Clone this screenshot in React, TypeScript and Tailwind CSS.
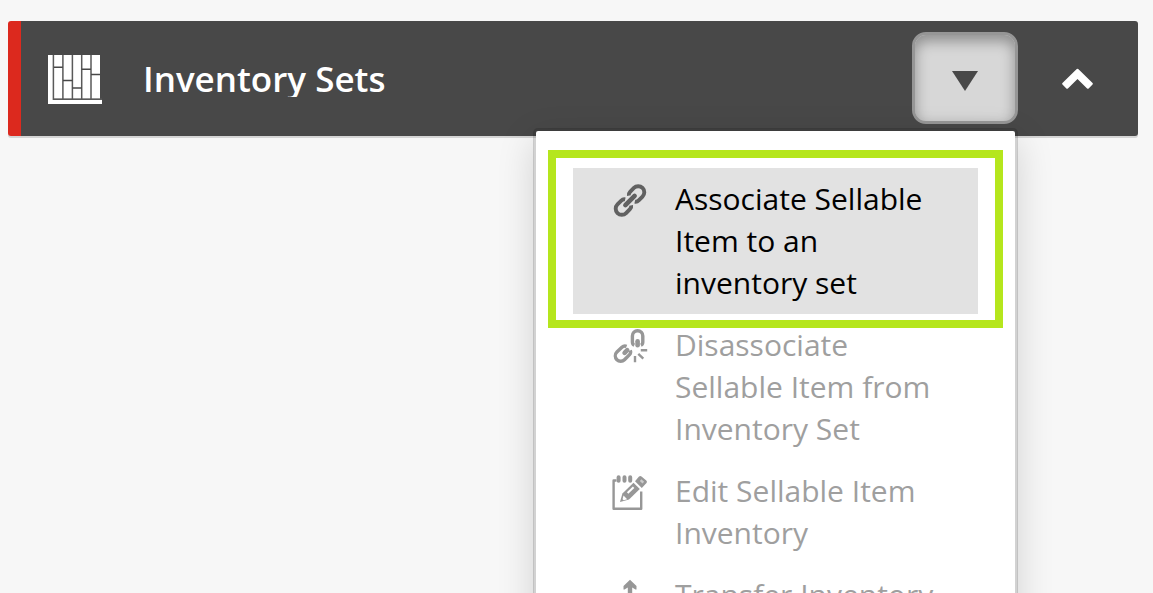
import type { ReactNode } from "react";

function InventoryIcon() {
  return (
    <svg width="54" height="49" viewBox="0 0 54 49" aria-hidden="true" className="mt-0.5 shrink-0">
      <path d="M0 0h5v44.5h49V49H0z" fill="#fff" />
      <path d="M6 0h46v43.8H6z" fill="#fff" />
      <path d="M5.4 0v44.2H54M14.9 0v44M24.4 0v44M33.7 0v44M43 0v44" fill="none" stroke="#5a5a5a" strokeWidth="1.5" />
      <path d="M6 12.3h8.8M15 25.4h9.4M24.4 33h9.3M33.7 14.2H43M43 19.6h9.5" fill="none" stroke="#484848" strokeWidth="1.5" />
    </svg>
  );
}

function LinkIcon() {
  return (
    <svg width="36" height="36" viewBox="0 0 36 36" aria-hidden="true">
      <g transform="rotate(-45 18 18.500)" fill="none" stroke="currentColor" strokeWidth="3.900">
        <path d="M20.600 14.300q1.200-1.900 3.600-1.900h5.400a6.100 6.100 0 0 1 0 12.200h-5.400q-2.400 0-3.600-1.900" />
        <path d="M15.400 14.300q-1.200-1.900-3.600-1.900H6.400a6.100 6.100 0 0 0 0 12.200h5.400q2.400 0 3.600-1.900" />
        <path d="M11.500 18.500h13" strokeLinecap="round" strokeWidth="4.600" />
      </g>
    </svg>
  );
}

function UnlinkIcon() {
  return (
    <svg width="36" height="36" viewBox="0 0 36 36" aria-hidden="true">
      <g fill="none" stroke="currentColor" strokeWidth="3.400">
        <path d="M22.300 17.200q-1.900-.8-1.900-3.200V7.900a5.200 5.200 0 0 1 10.400 0V14q0 2.400-1.900 3.200" />
        <path d="M25.600 13.300v3.900" strokeLinecap="round" strokeWidth="4.600" />
        <path d="M14.600 18.300q-2.600-1-4.700 1l-5 4.800a5.300 5.300 0 0 0 7.600 7.600l4.800-4.800q2-2.100 1-4.600" />
        <path d="m12.600 24.800 2.600-2.600" strokeLinecap="round" strokeWidth="4.600" />
      </g>
      <path d="M28.800 22.200h6.400M26.300 25.900l5 4.800M23 28v6.200" fill="none" stroke="currentColor" strokeWidth="2.400" />
    </svg>
  );
}

function EditIcon() {
  return (
    <svg width="36" height="37" viewBox="0 0 36 37" aria-hidden="true">
      <path d="M4.500 6.500H1.600v28.200h27.600V17.500" fill="none" stroke="currentColor" strokeWidth="2.400" strokeLinejoin="round" />
      <path d="M6.600 3.200v3.600M12.500 3.200v3.600M18.200 3.200v3.600" stroke="currentColor" strokeWidth="4" strokeLinecap="round" />
      <path d="m8 28 2.400-8.600L21.500 8.800l6.300 6.300L17 25.600z" fill="currentColor" />
      <path d="m11.500 21.600 3.700 3.600-3.600 1-1-1z" fill="#fff" />
      <path d="m15.600 19 6-5.800" stroke="#fff" strokeWidth="2" />
      <path d="m23 7.300 4-4.700q1.200-1.300 2.500-.2l4.800 4q1.300 1.200.2 2.600l-4.700 5z" fill="currentColor" />
      <path d="m29.500 5.200 2.600 2.600-1.600 1.700-2.700-2.600z" fill="#fff" opacity=".5" />
    </svg>
  );
}

function TransferIcon() {
  return (
    <svg width="36" height="36" viewBox="0 0 36 36" aria-hidden="true">
      <path d="M18 1.800 11.500 8v3.500h1l3.300-2V30h4.400V9.500l3.300 2h1V8z" fill="currentColor" />
    </svg>
  );
}

type ActionProps = { icon: ReactNode; label: string; active?: boolean };

function Action({ icon, label, active = false }: ActionProps) {
  return (
    <li className="relative">
      <button
        type="button"
        disabled={!active}
        className={
          active
            ? "flex w-full items-start gap-[27px] bg-[#e2e2e2] py-2.5 pr-10 pl-[39px] text-left text-black"
            : "flex w-full items-start gap-[27px] py-2.5 pr-10 pl-[39px] text-left text-[#9f9f9f]"
        }
      >
        <span className={active ? "mt-1 shrink-0 text-[#616161]" : "mt-1 shrink-0 text-[#979797]"}>{icon}</span>
        <span>{label}</span>
      </button>
      {active && (
        <span className="pointer-events-none absolute -top-[18px] -right-[25px] -bottom-[14px] -left-[25px] z-10 border-8 border-[#b5e61d]" />
      )}
    </li>
  );
}

export default function App() {
  return (
    <main className="h-screen overflow-hidden bg-[#f7f7f7] pt-[21px] pr-[15px] pl-2 font-['Open_Sans',sans-serif]">
      <header className="flex h-[115px] items-center rounded-[3px] border-l-[13px] border-[#dc291e] bg-[#484848] pr-[44px] pb-px pl-[27px] shadow-[0_2px_0_#d5d5d5]">
        <InventoryIcon />
        <h1 className="mt-0.5 ml-[41px] h-9 flex-1 overflow-hidden text-[35px] leading-9 font-semibold text-white">Inventory Sets</h1>
        <div className="relative">
          <button
            type="button"
            aria-label="Actions"
            aria-expanded="true"
            className="flex h-[92px] w-[106px] items-center justify-center rounded-[14px] border-3 border-[#969696] bg-[#d7d7d7] shadow-[inset_0_6px_14px_rgba(0,0,0,0.34)]"
          >
            <svg width="26" height="20" viewBox="0 0 26 20" className="mt-1.5" aria-hidden="true">
              <path d="M0 0h26L13 20z" fill="#484848" />
            </svg>
          </button>
          <ul className="absolute top-24 right-0 w-[485px] rounded-[5px] border-3 border-black/15 bg-white bg-clip-padding px-[37px] pt-[37px] pb-9 text-[30px] leading-[42px] shadow-[0_12px_36px_rgba(0,0,0,0.15)]">
            <Action active icon={<LinkIcon />} label="Associate Sellable Item to an inventory set" />
            <Action icon={<UnlinkIcon />} label="Disassociate Sellable Item from Inventory Set" />
            <Action icon={<EditIcon />} label="Edit Sellable Item Inventory" />
            <Action icon={<TransferIcon />} label="Transfer Inventory" />
          </ul>
        </div>
        <button type="button" aria-label="Collapse" className="mt-0.5 ml-[43px]">
          <svg width="33" height="22" viewBox="0 0 34 22" aria-hidden="true">
            <path d="M17 .5q.7 0 1.300.6L32.500 15q.8.8 0 1.600L28.500 20.700q-.8.7-1.600 0L17 11 7.100 20.700q-.8.7-1.600 0L1.500 16.600q-.8-.8 0-1.600L15.700 1.100Q16.300.5 17 .5z" fill="#fff" />
          </svg>
        </button>
      </header>
    </main>
  );
}
